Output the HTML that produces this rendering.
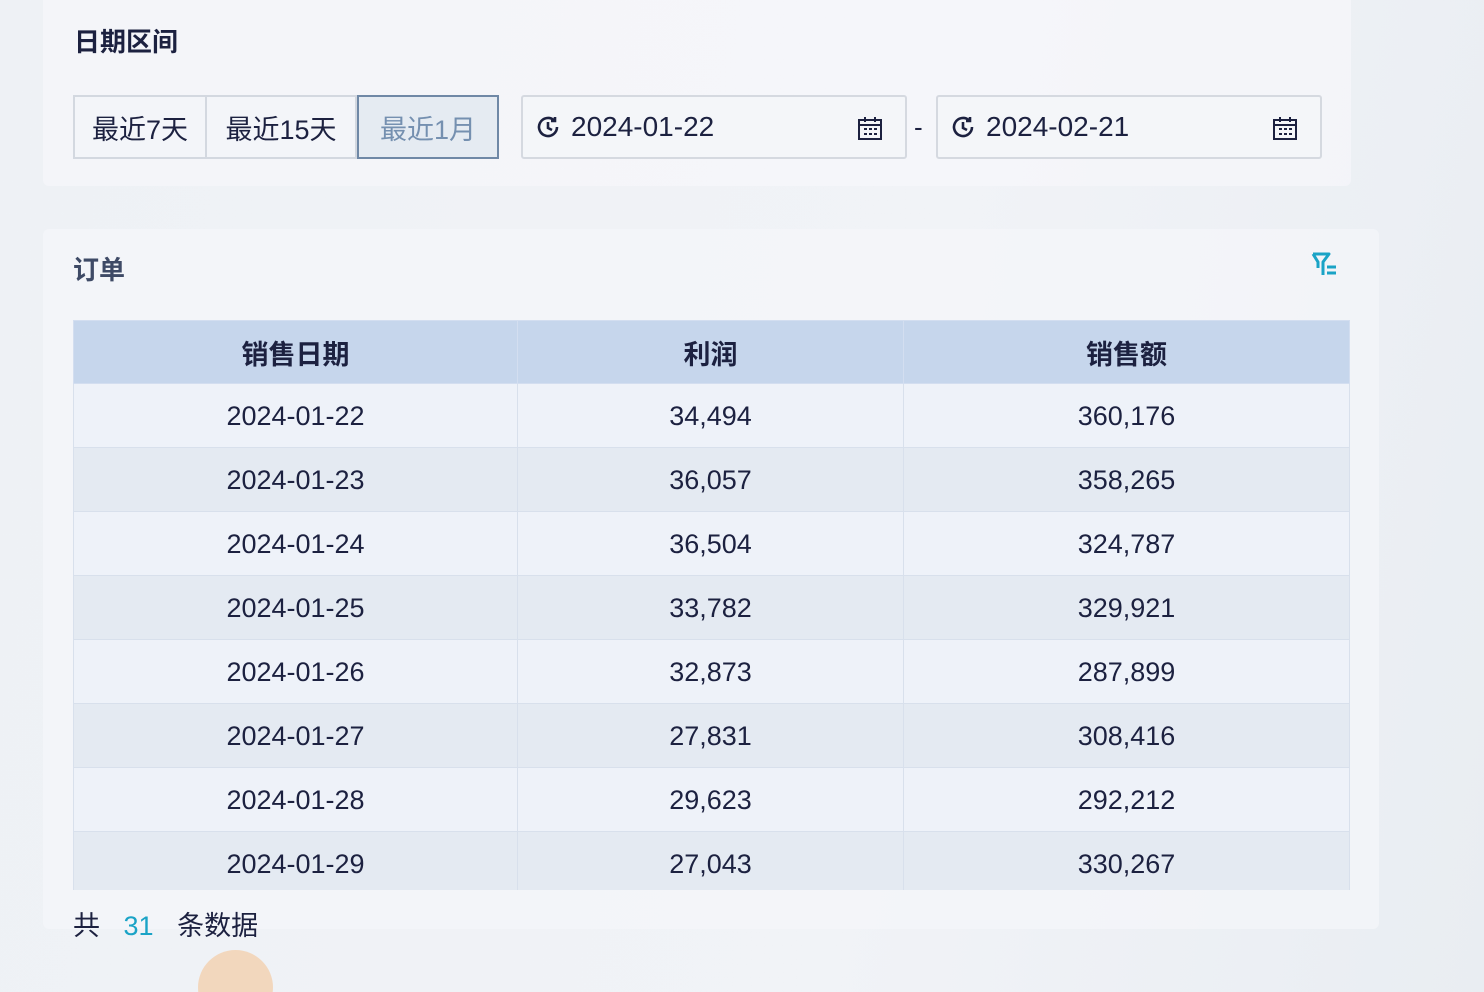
<!DOCTYPE html>
<html><head><meta charset="utf-8"><style>
*{margin:0;padding:0;box-sizing:border-box}
html,body{width:1484px;height:992px;overflow:hidden}
body{background:linear-gradient(100deg,#eef1f5 0%,#f1f3f7 60%,#e9edf2 100%);font-family:"Liberation Sans","Noto Sans CJK SC",sans-serif;color:#1c2140;position:relative}
.card1{position:absolute;left:43px;top:0;width:1308px;height:186px;background:rgba(246,247,251,.7);border-radius:0 0 6px 6px}
.card2{position:absolute;left:43px;top:229px;width:1336px;height:700px;background:rgba(244,246,250,.75);border-radius:6px}
.t{position:absolute;font-weight:bold;font-size:26px}
.btns{position:absolute;left:73px;top:95px;display:flex;height:64px}
.btn{border:2px solid #d3d8e0;font-size:27px;display:flex;align-items:center;justify-content:center;background:#f3f5f9}
.btn.a{border-color:#6f88a6;color:#7590b0;background:#e5ebf2}
.inp{position:absolute;top:95px;height:64px;width:386px;border:2px solid #d5d9e0;border-radius:3px;background:#f4f6f9;font-size:28px;display:flex;align-items:center;padding-left:12px}
.inp svg{margin-right:10px}
.cal{position:absolute;right:12px;top:18px}
table{position:absolute;left:73px;top:320px;border-collapse:collapse;width:1277px;font-size:27px}
th{background:#c6d6ec;height:63px;font-weight:bold;font-size:27px;border:1px solid #d3def0}
td{height:64px;text-align:center;border:1px solid #d8e0ec;padding-top:2px}
tr:nth-child(even) td{background:#eef2f9}
tr:nth-child(odd) td{background:#e4eaf2}
.clip{position:absolute;left:0;top:0;width:1484px;height:890px;overflow:hidden}
</style></head><body>
<div class="card1"></div>
<div class="t" style="left:74px;top:22px">日期区间</div>
<div class="btns">
<div class="btn" style="width:134px">最近7天</div>
<div class="btn" style="width:150px;border-left:none">最近15天</div>
<div class="btn a" style="width:142px">最近1月</div>
</div>
<div class="inp" style="left:521px"><svg width="26" height="26" viewBox="0 0 26 26" fill="none" stroke="#1c2140" stroke-width="2.6"><path d="M22 13a9 9 0 1 1-3-6.7"/><path d="M20 3v4h-4"/><path d="M13 8v6l4 2"/></svg>2024-01-22
<svg class="cal" width="26" height="26" viewBox="0 0 26 26" fill="none" stroke="#1c2140" stroke-width="2"><rect x="2" y="5" width="22" height="19"/><path d="M2 10h22M8 2v5M18 2v5"/><path d="M7 14h3M12 14h3M17 14h3M7 19h3M12 19h3M17 19h3"/></svg></div>
<div style="position:absolute;left:914px;top:112px;font-size:26px">-</div>
<div class="inp" style="left:936px"><svg width="26" height="26" viewBox="0 0 26 26" fill="none" stroke="#1c2140" stroke-width="2.6"><path d="M22 13a9 9 0 1 1-3-6.7"/><path d="M20 3v4h-4"/><path d="M13 8v6l4 2"/></svg>2024-02-21
<svg class="cal" width="26" height="26" viewBox="0 0 26 26" fill="none" stroke="#1c2140" stroke-width="2"><rect x="2" y="5" width="22" height="19"/><path d="M2 10h22M8 2v5M18 2v5"/><path d="M7 14h3M12 14h3M17 14h3M7 19h3M12 19h3M17 19h3"/></svg></div>
<div class="card2"></div>
<div class="t" style="left:73px;top:250px;color:#3e4a66">订单</div>
<svg style="position:absolute;left:1311px;top:252px" width="28" height="26" viewBox="0 0 28 26" fill="none" stroke="#1aa3c6" stroke-width="3" stroke-linejoin="round"><path d="M2 2h16l-6 8v13M2 2l5 8v6"/><path d="M16 15h9M16 21h9"/></svg>
<div class="clip"><table>
<tr><th style="width:444px">销售日期</th><th style="width:386px">利润</th><th>销售额</th></tr>
<tr><td>2024-01-22</td><td>34,494</td><td>360,176</td></tr>
<tr><td>2024-01-23</td><td>36,057</td><td>358,265</td></tr>
<tr><td>2024-01-24</td><td>36,504</td><td>324,787</td></tr>
<tr><td>2024-01-25</td><td>33,782</td><td>329,921</td></tr>
<tr><td>2024-01-26</td><td>32,873</td><td>287,899</td></tr>
<tr><td>2024-01-27</td><td>27,831</td><td>308,416</td></tr>
<tr><td>2024-01-28</td><td>29,623</td><td>292,212</td></tr>
<tr><td>2024-01-29</td><td>27,043</td><td>330,267</td></tr>
</table></div>
<div style="position:absolute;left:73px;top:904px;font-size:27px">共 <span style="color:#1aa3c6;margin:0 16px">31</span> 条数据</div>
<div style="position:absolute;left:198px;top:950px;width:75px;height:75px;border-radius:50%;background:#f2d7bd"></div>
</body></html>
